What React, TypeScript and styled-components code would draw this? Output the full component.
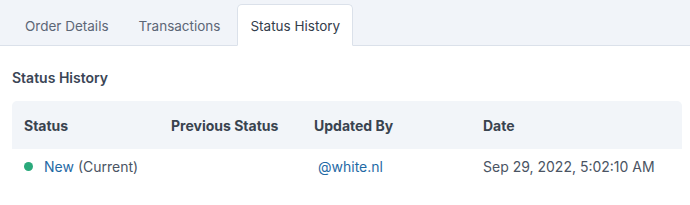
import React from 'react'
import styled, { createGlobalStyle } from 'styled-components'

const GlobalStyle = createGlobalStyle`
  body {
    margin: 0;
    background: #ffffff;
    font-family: Inter, "Liberation Sans", sans-serif;
    -webkit-font-smoothing: antialiased;
  }
`

const TabBar = styled.div`
  display: flex;
  align-items: flex-end;
  height: 45px;
  padding-left: 12px;
  background: #f1f4f9;
  border-bottom: 1px solid #dbe1ea;
`

const Tab = styled.div<{ $active?: boolean }>`
  box-sizing: border-box;
  display: flex;
  align-items: center;
  justify-content: center;
  padding: 2px 12px 0;
  margin-bottom: -1px;
  margin-right: 4px;
  height: 42px;
  font-size: 13.5px;
  color: ${p => (p.$active ? '#333d4b' : '#5c6676')};
  background: ${p => (p.$active ? '#ffffff' : 'transparent')};
  border: 1px solid ${p => (p.$active ? '#dbe1ea' : 'transparent')};
  border-bottom-color: ${p => (p.$active ? '#ffffff' : 'transparent')};
  border-radius: 5px 5px 0 0;
`

const Section = styled.div`
  padding: 23px 8px 0 12px;
`

const Title = styled.h3`
  margin: 0 0 15px;
  font-size: 14px;
  line-height: 17px;
  font-weight: 600;
  color: #3a4555;
`

const Table = styled.div`
  display: grid;
  grid-template-columns: 147px 143px 169px 1fr;
`

const HeadCell = styled.div<{ $first?: boolean; $last?: boolean }>`
  height: 48px;
  display: flex;
  align-items: center;
  padding: 0 12px;
  background: #f2f5f9;
  font-size: 14px;
  font-weight: 650;
  color: #39434f;
  border-top-left-radius: ${p => (p.$first ? '5px' : '0')};
  border-top-right-radius: ${p => (p.$last ? '5px' : '0')};
`

const Cell = styled.div`
  height: 35px;
  display: flex;
  align-items: center;
  padding: 0 12px;
  font-size: 14px;
  color: #4a5463;
`

const Dot = styled.span`
  width: 9px;
  height: 9px;
  border-radius: 50%;
  background: #2aa97b;
  margin-right: 11px;
  flex-shrink: 0;
`

const Link = styled.a`
  color: #1f6aa5;
  text-decoration: none;
  margin-right: 4px;
`

const UserLink = styled(Link)`
  margin-left: 4px;
`

export default function App() {
  return (
    <>
      <GlobalStyle />
      <TabBar>
        <Tab>Order Details</Tab>
        <Tab>Transactions</Tab>
        <Tab $active>Status History</Tab>
      </TabBar>
      <Section>
        <Title>Status History</Title>
        <Table>
          <HeadCell $first>Status</HeadCell>
          <HeadCell>Previous Status</HeadCell>
          <HeadCell>Updated By</HeadCell>
          <HeadCell $last>Date</HeadCell>
          <Cell>
            <Dot />
            <Link href="#">New</Link>(Current)
          </Cell>
          <Cell />
          <Cell>
            <UserLink href="#">@white.nl</UserLink>
          </Cell>
          <Cell>Sep 29, 2022, 5:02:10 AM</Cell>
        </Table>
      </Section>
    </>
  )
}
